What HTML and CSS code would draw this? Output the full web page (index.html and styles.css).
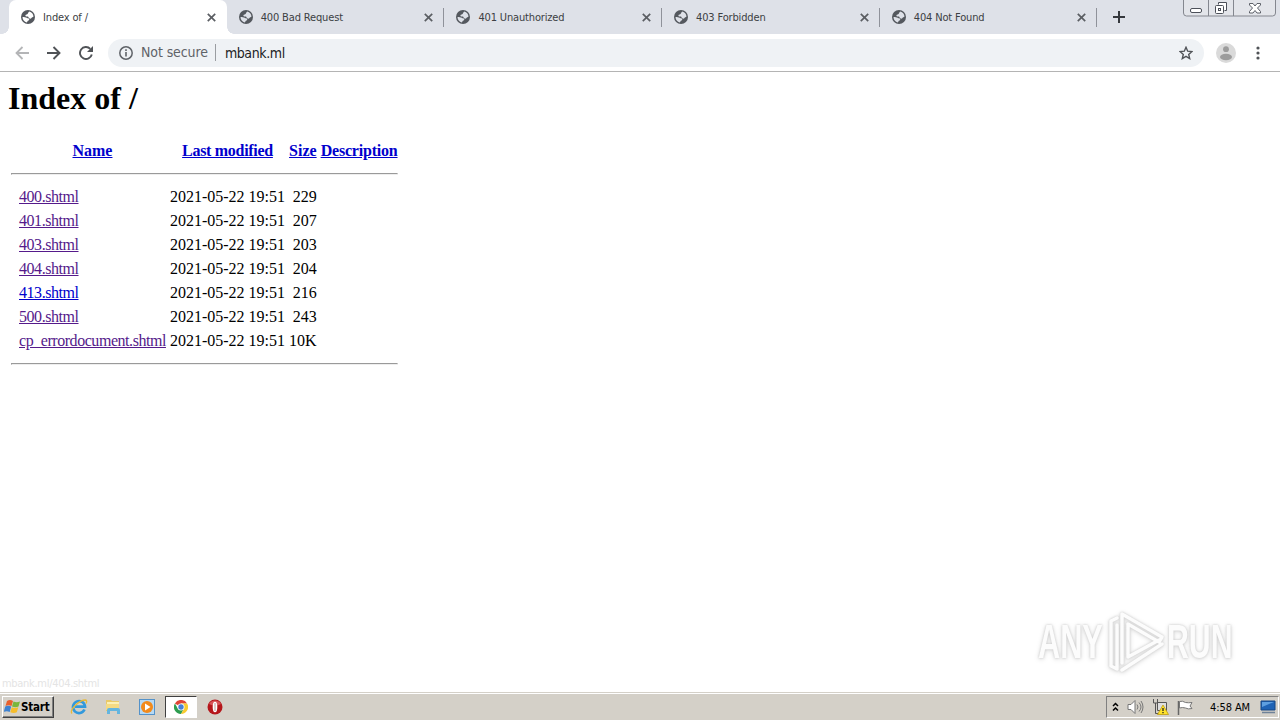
FILE: index.html
```html
<!DOCTYPE html>
<html lang="en">
<head>
    <meta charset="UTF-8">
    <title>Index of /</title>
    <link rel="stylesheet" href="styles.css">
</head>
<body>
    <svg class="defs" width="0" height="0">
        <symbol id="globe" viewBox="0 0 14 14">
            <circle cx="7" cy="7" r="7" fill="#54585e"/>
            <path d="M8.300 1.600c2.400.6 4 2.600 4.200 5-.7 1.100-1.600.6-2 1.400-.5.8-1.500.900-2.300.3-.8-.6-.5-1.400-1.500-1.700-.9-.2-2.100.1-2.300-.9-.1-1.100 1-1.300 1.800-1.500 1-.3.700-1.500 2.100-2.600zM1.500 7c1.600 0 3.200.1 4.200.8.800.7 2.600.4 2.600 1.600 0 1-1.400 1-1.700 1.700-.3.600-.1 1.100-.8 1.300C3.300 11.900 1.500 9.700 1.500 7z" fill="currentColor"/>
        </symbol>
        <symbol id="close" viewBox="0 0 8 8">
            <path d="M.7.7l6.600 6.600M7.300.7L.7 7.300" stroke="#5b5e63" stroke-width="1.500"/>
        </symbol>
    </svg>

    <div class="tabs">
        <div class="tab active">
            <svg class="favicon"><use href="#globe"/></svg>
            <span>Index of /</span>
            <svg class="close"><use href="#close"/></svg>
        </div>
        <div class="tab">
            <svg class="favicon"><use href="#globe"/></svg>
            <span>400 Bad Request</span>
            <svg class="close"><use href="#close"/></svg>
        </div>
        <div class="tab">
            <svg class="favicon"><use href="#globe"/></svg>
            <span>401 Unauthorized</span>
            <svg class="close"><use href="#close"/></svg>
        </div>
        <div class="tab">
            <svg class="favicon"><use href="#globe"/></svg>
            <span>403 Forbidden</span>
            <svg class="close"><use href="#close"/></svg>
        </div>
        <div class="tab">
            <svg class="favicon"><use href="#globe"/></svg>
            <span>404 Not Found</span>
            <svg class="close"><use href="#close"/></svg>
        </div>
        <svg class="new-tab" width="12" height="12" viewBox="0 0 12 12"><path d="M6 0v12M0 6h12" stroke="#35383d" stroke-width="2"/></svg>
        <svg class="window-buttons" width="94" height="17" viewBox="0 0 94 17" fill="none" stroke="#84878f">
            <path d="M.5 0v13q0 3 3 3h86q3 0 3-3V0M25.500 0v16M50.500 0v16" fill="#e3e5ea"/>
            <g stroke="#4c5059">
                <rect x="7.500" y="8.500" width="11" height="4" rx="1.500" fill="#fff"/>
                <path d="M35.500 4.500v-2h8v8h-2" fill="#fff"/>
                <rect x="32.500" y="5.500" width="8" height="8" rx="1" fill="#fff"/>
                <rect x="35.500" y="8.500" width="2" height="2"/>
                <path d="M66.500 3.500h3.500l2 2.500 2-2.500h3.500v1.500L74.500 8l3 3.500v1.500H74l-2-2.500-2 2.500h-3.500v-1.500l3-3.500-3-3z" fill="#fff" stroke-width=".9"/>
            </g>
        </svg>
    </div>

    <div class="toolbar">
        <svg class="nav" width="14" height="14" viewBox="0 0 14 14"><path d="M14 7H1.500M7.500 1L1.500 7l6 6" fill="none" stroke="#b4b5b7" stroke-width="1.800"/></svg>
        <svg class="nav" width="14" height="14" viewBox="0 0 14 14"><path d="M0 7h12.500M6.500 1l6 6-6 6" fill="none" stroke="#505357" stroke-width="1.900"/></svg>
        <svg class="nav" width="14" height="14" viewBox="0 0 14 14"><path d="M12.800 8.500A6 6 0 1 1 11.300 2.800" fill="none" stroke="#505357" stroke-width="1.900"/><path d="M14 0v6H8z" fill="#505357"/></svg>
        <div class="omnibox">
            <svg width="14" height="14" viewBox="0 0 14 14"><circle cx="7" cy="7" r="6.200" fill="none" stroke="#5f6368" stroke-width="1.500"/><path d="M7 6v4.500M7 3.300v1.600" stroke="#5f6368" stroke-width="1.600"/></svg>
            <span class="security">Not secure</span>
            <span class="url">mbank.ml</span>
            <svg class="star" width="14" height="14" viewBox="0 0 14 14"><path d="M7 1.300l1.700 3.900 4.200.4-3.200 2.800 1 4.200L7 10.400l-3.700 2.200 1-4.200L1.100 5.600l4.200-.4z" fill="none" stroke="#505357" stroke-width="1.400"/></svg>
        </div>
        <svg class="avatar" width="20" height="20" viewBox="0 0 20 20"><circle cx="10" cy="10" r="10" fill="#dadada"/><circle cx="10" cy="6.200" r="2.900" fill="#9c9c9c"/><ellipse cx="10" cy="14" rx="6" ry="3.200" fill="#9c9c9c"/></svg>
        <svg class="menu" width="4" height="14" viewBox="0 0 4 14" fill="#505357"><circle cx="2" cy="2" r="1.600"/><circle cx="2" cy="7" r="1.600"/><circle cx="2" cy="12" r="1.600"/></svg>
    </div>

    <main>
        <h1>Index of /</h1>
        <table>
            <tr><th>&nbsp;</th><th><a href="#">Name</a></th><th><a class="modified" href="#">Last modified</a></th><th><a href="#">Size</a></th><th><a class="description" href="#">Description</a></th></tr>
            <tr class="rule"><th colspan="5"><hr></th></tr>
            <tr><td></td><td><a class="visited" href="#">400.shtml</a></td><td>2021-05-22 19:51</td><td class="size">229</td><td></td></tr>
            <tr><td></td><td><a class="visited" href="#">401.shtml</a></td><td>2021-05-22 19:51</td><td class="size">207</td><td></td></tr>
            <tr><td></td><td><a class="visited" href="#">403.shtml</a></td><td>2021-05-22 19:51</td><td class="size">203</td><td></td></tr>
            <tr><td></td><td><a class="visited" href="#">404.shtml</a></td><td>2021-05-22 19:51</td><td class="size">204</td><td></td></tr>
            <tr><td></td><td><a href="#">413.shtml</a></td><td>2021-05-22 19:51</td><td class="size">216</td><td></td></tr>
            <tr><td></td><td><a class="visited" href="#">500.shtml</a></td><td>2021-05-22 19:51</td><td class="size">243</td><td></td></tr>
            <tr><td></td><td><a class="visited" href="#">cp_errordocument.shtml</a></td><td>2021-05-22 19:51</td><td class="size">10K</td><td></td></tr>
            <tr class="rule"><th colspan="5"><hr></th></tr>
        </table>
        <div class="status">mbank.ml/404.shtml</div>
        <div class="watermark">
            <span>ANY</span>
            <svg width="60" height="66" viewBox="0 0 60 66" fill="none" stroke="#fcfcfc" stroke-width="3.500" stroke-linejoin="round" stroke-linecap="round">
                <path d="M10 9l-6 3v45l6 3V16"/>
                <path d="M15 54V5l40 23-3 5-31-18v33l31-17M55 35L15 61"/>
            </svg>
            <span class="run">RUN</span>
        </div>
    </main>

    <footer class="taskbar">
        <button class="start">
            <svg width="17" height="16" viewBox="0 0 17 16"><path d="M3 2q3-2 6 0L7.500 7q-3-1.500-6 0z" fill="#e8602c"/><path d="M9.500 2.500q3 1.500 6.500 0L14.500 7.500q-3 1.500-6.500 0z" fill="#79b63c"/><path d="M1.200 7.500q3-1.500 6 0L5.700 13q-3-1.500-6 0z" fill="#3e82d0"/><path d="M7.800 8.200q3 1.500 6.500 0l-1.500 5q-3 1.500-6.500 0z" fill="#f6bd2b"/></svg>
            Start
        </button>
        <div class="launch">
            <svg width="18" height="18" viewBox="0 0 18 18"><path d="M14.500 11.500A6 6 0 1 1 15 8.700H5" fill="none" stroke="#3299dc" stroke-width="2.700"/><path d="M2 15.500C-1 12 9 2 15.500 2q2 .5.500 3.500" fill="none" stroke="#e8b938" stroke-width="1.300"/></svg>
        </div>
        <div class="launch">
            <svg width="16" height="16" viewBox="0 0 16 16"><path d="M1 1h5l1 1h7v10H1z" fill="#e9c968"/><path d="M2 3h12v3H2z" fill="#fbf0b5"/><path d="M1 5h13v6H1z" fill="#f4da83"/><path d="M2 15v-4q0-2 2-2h9q2 0 2 2v4h-3v-3H5v3z" fill="#64b5df"/></svg>
        </div>
        <div class="launch">
            <svg width="16" height="16" viewBox="0 0 16 16"><rect x=".5" y=".5" width="15" height="15" fill="#b6d9f4" stroke="#5492c9"/><circle cx="8" cy="8" r="6" fill="#f28a1b"/><path d="M6 4.500v7l5.500-3.500z" fill="#fff"/></svg>
        </div>
        <div class="launch pressed">
            <svg width="14" height="14" viewBox="0 0 14 14"><path d="M7 7L.9 3.500A7 7 0 0 1 13.100 3.500H7z" fill="#df4436"/><path d="M7 7l3 1.700L7 14A7 7 0 0 1 .9 3.500L4 8.700z" fill="#2d9d50"/><path d="M7 3.500h6.100A7 7 0 0 1 7 14l3-5.300z" fill="#f8cb30"/><circle cx="7" cy="7" r="3.500" fill="#fff"/><circle cx="7" cy="7" r="2.700" fill="#4680d8"/></svg>
        </div>
        <div class="launch">
            <svg width="16" height="16" viewBox="0 0 16 16"><circle cx="8" cy="8" r="7.500" fill="#b5161b"/><path d="M2 5a7 7 0 0 1 12 0q-6 3-12 0z" fill="#d7555a"/><ellipse cx="8" cy="8" rx="2.300" ry="5.300" fill="#fff"/><path d="M8 4v8" stroke="#b99" stroke-width="1"/></svg>
        </div>
        <div class="tray">
            <svg width="7" height="10" viewBox="0 0 7 10"><path d="M1 4l2.500-2.500L6 4M1 8.500L3.500 6 6 8.500" fill="none" stroke="#000" stroke-width="1.500"/></svg>
            <svg width="17" height="14" viewBox="0 0 17 14" fill="none" stroke="#777"><path d="M1 4.500h3l4-4v13l-4-4H1z" fill="#fff"/><path d="M10 4.500q2 2.500 0 5M12 2.500q4 4.500 0 9M14 1q4 6 0 12"/></svg>
            <svg width="17" height="16" viewBox="0 0 17 16"><path d="M5.500 3.500h9v8h-9z" fill="#dedede" stroke="#555"/><path d="M1.500 0v4h4V0M3.500 4v10.500h5" fill="none" stroke="#555"/><path d="M7 14h6" stroke="#555"/><path d="M11 6l5.500 9.500h-11z" fill="#ffe32b" stroke="#b99400" stroke-width=".7"/><path d="M11 9v3M11 13v1.300" stroke="#222" stroke-width="1.300"/></svg>
            <svg width="16" height="15" viewBox="0 0 16 15"><path d="M1.500 1v14" stroke="#666" stroke-width="1.500"/><path d="M2.500 1.500q3-1 6 1 3 .5 6.500 0l-2 3.500 2 2.500q-4 1-6.500-.5-3-1-6 0z" fill="#fff" stroke="#777"/></svg>
            <span class="clock">4:58 AM</span>
            <svg width="16" height="14" viewBox="0 0 16 14"><path d="M1 1h14v9H1z" fill="#1f63b5" stroke="#174783"/><path d="M2 2h12L2 7z" fill="#5e9fe0"/><path d="M2 12.500h13" stroke="#6f8298" stroke-width="1.500"/></svg>
        </div>
    </footer>
</body>
</html>
```
FILE: styles.css
```css
* {
    box-sizing: border-box;
}
body {
    margin: 0;
    width: 1280px;
    height: 720px;
    overflow: hidden;
    display: flex;
    flex-direction: column;
    background-color: #fff;
    font-family: "DejaVu Sans Condensed", "DejaVu Sans", sans-serif;
    font-stretch: condensed;
}
svg {
    display: block;
    flex: none;
}
.defs {
    position: absolute;
}
.tabs {
    height: 34px;
    flex: none;
    display: flex;
    align-items: center;
    padding-left: 9px;
    background-color: #dee1e8;
    color: #3c4043;
    font-size: 11px;
    letter-spacing: -0.15px;
}
.tab {
    width: 217.700px;
    height: 34px;
    padding: 0 11px 0 12px;
    display: flex;
    align-items: center;
    position: relative;
}
.tab span {
    flex: 1;
    margin-left: 8px;
}
.tab:not(.active)::after {
    content: "";
    position: absolute;
    right: 0;
    top: 8px;
    width: 1px;
    height: 19px;
    background-color: #8f929a;
}
.tab.active {
    background-color: #fff;
    border-radius: 7px 7px 0 0;
}
.tab.active::before, .tab.active::after {
    content: "";
    position: absolute;
    bottom: 0;
    width: 7px;
    height: 7px;
}
.tab.active::before {
    left: -7px;
    background: radial-gradient(circle at 0 0, transparent 6.500px, #fff 7px);
}
.tab.active::after {
    right: -7px;
    background: radial-gradient(circle at 100% 0, transparent 6.500px, #fff 7px);
}
.favicon {
    width: 14px;
    height: 14px;
    color: #dee1e8;
}
.active .favicon {
    color: #fff;
}
.close {
    width: 9px;
    height: 9px;
}
.new-tab {
    margin-left: 16px;
}
.window-buttons {
    align-self: flex-start;
    margin-left: auto;
    margin-right: 3px;
}
.toolbar {
    height: 38px;
    flex: none;
    display: flex;
    align-items: center;
    padding-left: 15px;
    border-bottom: 1px solid #b4b4b4;
}
.nav {
    margin-right: 18px;
}
.omnibox {
    width: 1096px;
    height: 28px;
    margin-left: -3px;
    padding: 0 11px;
    display: flex;
    align-items: center;
    border-radius: 14px;
    background-color: #eff2f5;
    font-size: 14px;
}
.security {
    margin-left: 8px;
    padding-right: 7px;
    border-right: 1px solid #9a9da1;
    color: #5f6368;
    line-height: 17px;
    letter-spacing: -0.1px;
}
.url {
    margin-left: 9px;
    color: #202124;
    letter-spacing: -0.4px;
}
.star {
    margin-left: auto;
}
.avatar {
    margin-left: 12px;
}
.menu {
    margin-left: 20px;
}
main {
    flex: 1;
    position: relative;
    padding: 8px;
    font-family: "Liberation Serif", serif;
    font-size: 16px;
    line-height: 20px;
}
h1 {
    margin: 0 0 21px;
    font-size: 32px;
    line-height: 37px;
}
table {
    border-spacing: 2px;
}
th, td {
    padding: 1px;
    white-space: nowrap;
}
.rule th {
    line-height: 0;
}
hr {
    margin: 8px 0;
}
.size {
    text-align: right;
}
a {
    color: #0000cc;
}
td a {
    letter-spacing: -0.450px;
}
.modified {
    letter-spacing: -0.3px;
}
.description {
    letter-spacing: -0.2px;
}
a.visited {
    color: #551a8b;
}
.status {
    position: absolute;
    left: 2px;
    bottom: -1px;
    color: #e4e4e4;
    font: 11px "DejaVu Sans Condensed", sans-serif;
    line-height: 19px;
    letter-spacing: -0.3px;
}
.watermark {
    position: absolute;
    left: 1038px;
    top: 535px;
    display: flex;
    align-items: center;
    gap: 4px;
    color: #fcfcfc;
    font-family: "Liberation Sans", sans-serif;
    font-size: 48px;
    font-weight: bold;
    line-height: 70px;
    filter: drop-shadow(0 0 1px #ccc) drop-shadow(0 1px 2px #ddd);
}
.watermark span {
    width: 65px;
    transform: scaleX(0.64);
    transform-origin: left;
}
.watermark .run {
    margin-left: -4px;
    transform: scaleX(0.63);
}
.taskbar {
    height: 28px;
    flex: none;
    display: flex;
    align-items: center;
    padding: 1px 1px 0 2px;
    background-color: #d4d0c8;
    border-top: 1px solid #d4d0c8;
    box-shadow: inset 0 1px #fff;
}
.start {
    width: 52px;
    height: 22px;
    margin-right: 9px;
    padding: 0 1px;
    display: flex;
    align-items: center;
    border: 1px solid;
    border-color: #fff #404040 #404040 #fff;
    box-shadow: inset -1px -1px #808080;
    background-color: #d4d0c8;
    color: #000;
    font: bold 11.500px "DejaVu Sans Condensed", sans-serif;
    letter-spacing: -0.2px;
}
.launch {
    width: 32px;
    height: 22px;
    margin-right: 2px;
    display: flex;
    align-items: center;
    justify-content: center;
}
.launch.pressed {
    background-color: #fff;
    border: 1px solid;
    border-color: #404040 #fff #fff #404040;
}
.tray {
    width: 173px;
    height: 22px;
    margin-left: auto;
    padding: 0 2px 0 5px;
    display: flex;
    align-items: center;
    gap: 8px;
    border: 1px solid;
    border-color: #808080 #fff #fff #808080;
    font-size: 11px;
}
.clock {
    margin-left: auto;
    margin-right: 2px;
    letter-spacing: -0.1px;
}
```
